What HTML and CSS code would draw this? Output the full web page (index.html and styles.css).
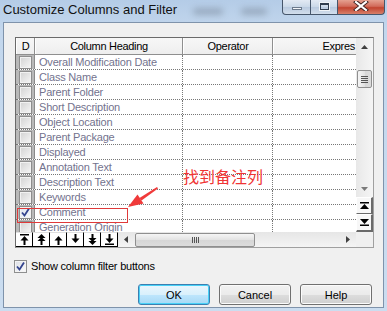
FILE: index.html
```html
<!DOCTYPE html>
<html>
<head>
<meta charset="utf-8">
<title>Customize Columns and Filter</title>
<link rel="stylesheet" href="styles.css">
</head>
<body>
<div class="window">
  <div class="titlebar">
    <span class="title">Customize Columns and Filter</span>
    <span class="smudge s1"></span>
    <span class="smudge s2"></span>
    <div class="controls">
      <div class="ctl min"><span class="min-glyph"></span></div>
      <div class="ctl max"><span class="max-glyph"></span></div>
      <div class="ctl close">
        <svg width="16" height="10" viewBox="0 0 16 10"><path d="M3 1 L13 9 M13 1 L3 9" stroke="#3a2020" stroke-width="4" stroke-linecap="square"/><path d="M3 1 L13 9 M13 1 L3 9" stroke="#ffffff" stroke-width="2.2" stroke-linecap="square"/></svg>
      </div>
    </div>
  </div>
  <div class="client">
    <div class="grid">
      <div class="main">
        <div class="header">
          <div class="hc c-d">D</div>
          <div class="hc c-h">Column Heading</div>
          <div class="hc c-o">Operator</div>
          <div class="hc c-e hc-e">Expres</div>
        </div>
        <div class="rows">
          <div class="row"><div class="c-d"><span class="cb"></span></div><div class="c-h">Overall Modification Date</div><div class="c-o"></div><div class="c-e"></div></div>
          <div class="row"><div class="c-d"><span class="cb"></span></div><div class="c-h">Class Name</div><div class="c-o"></div><div class="c-e"></div></div>
          <div class="row"><div class="c-d"><span class="cb"></span></div><div class="c-h">Parent Folder</div><div class="c-o"></div><div class="c-e"></div></div>
          <div class="row"><div class="c-d"><span class="cb"></span></div><div class="c-h">Short Description</div><div class="c-o"></div><div class="c-e"></div></div>
          <div class="row"><div class="c-d"><span class="cb"></span></div><div class="c-h">Object Location</div><div class="c-o"></div><div class="c-e"></div></div>
          <div class="row"><div class="c-d"><span class="cb"></span></div><div class="c-h">Parent Package</div><div class="c-o"></div><div class="c-e"></div></div>
          <div class="row"><div class="c-d"><span class="cb"></span></div><div class="c-h">Displayed</div><div class="c-o"></div><div class="c-e"></div></div>
          <div class="row"><div class="c-d"><span class="cb"></span></div><div class="c-h">Annotation Text</div><div class="c-o"></div><div class="c-e"></div></div>
          <div class="row"><div class="c-d"><span class="cb"></span></div><div class="c-h">Description Text</div><div class="c-o"></div><div class="c-e"></div></div>
          <div class="row"><div class="c-d"><span class="cb"></span></div><div class="c-h">Keywords</div><div class="c-o"></div><div class="c-e"></div></div>
          <div class="row"><div class="c-d"><span class="cb on"><svg width="11" height="11" viewBox="0 0 11 11"><path d="M2 5.5 L4.5 8.5 L9 1.5" fill="none" stroke="#33438e" stroke-width="1.8"/></svg></span></div><div class="c-h">Comment</div><div class="c-o"></div><div class="c-e"></div></div>
          <div class="row"><div class="c-d"><span class="cb"></span></div><div class="c-h">Generation Origin</div><div class="c-o"></div><div class="c-e"></div></div>
        </div>
        <div class="hbar">
          <div class="movebtns">
            <div class="mb"><svg width="9" height="11" viewBox="0 0 9 11"><rect x="0" y="0" width="9" height="1.5"/><path d="M4.5 2 L0.5 6.5 L8.5 6.5 Z"/><rect x="3.5" y="6" width="2" height="5"/></svg></div>
            <div class="mb"><svg width="9" height="11" viewBox="0 0 9 11"><path d="M4.5 0 L0.5 4 L8.5 4 Z"/><path d="M4.5 3 L0.5 7 L8.5 7 Z"/><rect x="3.5" y="6.5" width="2" height="4.5"/></svg></div>
            <div class="mb"><svg width="9" height="11" viewBox="0 0 9 11"><path d="M4.5 2 L0.5 6.5 L8.5 6.5 Z"/><rect x="3.5" y="6" width="2" height="5"/></svg></div>
            <div class="mb"><svg width="9" height="11" viewBox="0 0 9 11"><rect x="3.5" y="0" width="2" height="5"/><path d="M0.5 4.5 L8.5 4.5 L4.5 9 Z"/></svg></div>
            <div class="mb"><svg width="9" height="11" viewBox="0 0 9 11"><rect x="3.5" y="0" width="2" height="4.5"/><path d="M0.5 4 L8.5 4 L4.5 8 Z"/><path d="M0.5 7 L8.5 7 L4.5 11 Z"/></svg></div>
            <div class="mb"><svg width="9" height="11" viewBox="0 0 9 11"><rect x="3.5" y="0" width="2" height="5"/><path d="M0.5 4.5 L8.5 4.5 L4.5 9 Z"/><rect x="0" y="9.5" width="9" height="1.5"/></svg></div>
          </div>
          <div class="hscroll">
            <div class="harrow"><svg width="4" height="7" viewBox="0 0 4 7"><path d="M4 0 L0 3.5 L4 7 Z" fill="#404040"/></svg></div>
            <div class="htrack"><div class="hthumb"><span class="vgrip"></span><span class="vgrip"></span><span class="vgrip"></span><span class="vgrip"></span></div></div>
            <div class="harrow"><svg width="4" height="7" viewBox="0 0 4 7"><path d="M0 0 L4 3.5 L0 7 Z" fill="#404040"/></svg></div>
          </div>
        </div>
      </div>
      <div class="vbar">
        <div class="varrow up"><svg width="7" height="4" viewBox="0 0 7 4"><path d="M0 4 L3.5 0 L7 4 Z" fill="#404040"/></svg></div>
        <div class="vgap"></div>
        <div class="vthumb"><span class="hgrip"></span><span class="hgrip"></span><span class="hgrip"></span><span class="hgrip"></span></div>
        <div class="vtrack"></div>
        <div class="varrow down"><svg width="7" height="4" viewBox="0 0 7 4"><path d="M0 0 L7 0 L3.5 4 Z" fill="#7a7a7a"/></svg></div>
        <div class="vb"><svg width="9" height="7" viewBox="0 0 9 7"><rect x="0" y="0" width="9" height="1.5"/><path d="M4.5 2 L0 7 L9 7 Z"/></svg></div>
        <div class="vb"><svg width="9" height="7" viewBox="0 0 9 7"><path d="M0 0 L9 0 L4.5 5 Z"/><rect x="0" y="5.5" width="9" height="1.5"/></svg></div>
        <div class="vcorner"></div>
      </div>
    </div>
    <label class="filter"><span class="cb2"><svg width="11" height="11" viewBox="0 0 11 11"><path d="M2 5.5 L4.5 8.5 L9 1.5" fill="none" stroke="#33438e" stroke-width="1.8"/></svg></span>Show column filter buttons</label>
    <div class="buttons">
      <button class="btn default">OK</button>
      <button class="btn">Cancel</button>
      <button class="btn">Help</button>
    </div>
  </div>
  <div class="note">找到备注列</div>
  <div class="mark"></div>
  <svg class="arrow" width="45" height="35" viewBox="0 0 45 35">
    <path d="M8 29 L17.5 16.5 L23.5 25.5 Z" fill="#f03a3a"/>
    <path d="M19.5 20 L21.5 22.5 L38 10.5 L37 9 Z" fill="#f03a3a"/>
  </svg>
</div>
</body>
</html>
```

FILE: styles.css
```css
* { box-sizing: border-box; }
html, body { margin: 0; padding: 0; }
body {
  width: 387px;
  height: 311px;
  overflow: hidden;
  font-family: "Liberation Sans", Arial, sans-serif;
  background: #c6d9ee;
}
.window {
  position: relative;
  width: 387px;
  height: 311px;
  display: flex;
  flex-direction: column;
  background: linear-gradient(to bottom, #b4cce7 0, #c3d7ed 30px, #cbddf0 100%);
}
.titlebar {
  height: 22px;
  display: flex;
  align-items: flex-start;
  flex: none;
}
.title {
  font-size: 13px;
  line-height: 20px;
  padding-left: 3px;
  color: #111;
  white-space: nowrap;
}
.smudge {
  height: 7px;
  margin-top: 8px;
  background: rgba(90, 100, 115, 0.35);
  filter: blur(3px);
  border-radius: 4px;
}
.s1 { width: 30px; margin-left: 16px; }
.s2 { width: 26px; margin-left: 18px; }
.controls {
  margin-left: auto;
  margin-right: 2px;
  display: flex;
}
.ctl {
  height: 15px;
  border: 1px solid #46566b;
  border-top: none;
  display: flex;
  align-items: center;
  justify-content: center;
  background: linear-gradient(to bottom, #e2eaf4 0, #cad8e8 50%, #b9cadf 51%, #d2deec 100%);
}
.ctl + .ctl { border-left: none; }
.min { width: 29px; border-bottom-left-radius: 4px; }
.max { width: 27px; }
.close {
  width: 47px;
  border-bottom-right-radius: 4px;
  background: linear-gradient(to bottom, #e5a190 0, #d26b5a 45%, #c2442f 55%, #d7806a 100%);
}
.min-glyph {
  width: 10px;
  height: 3px;
  margin-top: 3px;
  background: #f2f5f9;
  border: 1px solid #6b7a8c;
}
.max-glyph {
  width: 9px;
  height: 7px;
  margin-top: -2px;
  border: 1px solid #2f3d4e;
  border-top-width: 2px;
  box-shadow: 0 0 0 1px #f0f4f8;
}
.close svg { margin-top: -3px; }

.client {
  height: 286px;
  margin: 0 3px 3px 3px;
  border: 1px solid #7f93ab;
  background: #f0f0f0;
  padding: 14px 11px 3px 11px;
  display: flex;
  flex-direction: column;
}
.grid {
  width: 359px;
  height: 211px;
  display: flex;
  border: 1px solid;
  border-color: #6a6a6a #a0a0a0 #a0a0a0 #6a6a6a;
  background: #fff;
  flex: none;
}
.main {
  width: 340px;
  display: flex;
  flex-direction: column;
  overflow: hidden;
}
.header {
  height: 17px;
  display: flex;
  flex: none;
  background: linear-gradient(to bottom, #f7f7f7, #eeeeee);
  border-bottom: 1px solid #8f8f8f;
}
.hc {
  font-size: 11px;
  letter-spacing: -0.3px;
  line-height: 16px;
  color: #000;
  text-align: center;
  white-space: nowrap;
  border-right: 1px solid #8f8f8f;
  border-left: 1px solid #ffffff;
}
.hc-e {
  text-align: right;
  border-right: none;
  padding-right: 1px;
}
.c-d { width: 19px; flex: none; }
.c-h { width: 148px; flex: none; }
.c-o { width: 90px; flex: none; }
.c-e { width: 83px; flex: none; }
.rows {
  height: 177px;
  overflow: hidden;
  flex: none;
}
.row {
  height: 15px;
  display: flex;
  border-bottom: 1px dotted #777;
}
.row > div {
  border-right: 1px dotted #777;
  font-size: 11px;
  letter-spacing: -0.2px;
  line-height: 14px;
  color: #73738e;
  white-space: nowrap;
}
.row > .c-e { border-right: none; }
.row .c-h { padding-left: 4px; }
.row .c-d {
  background: #b9b9b9;
  border-right: 1px solid #8a8a8a;
  display: flex;
  align-items: center;
  padding-left: 3px;
}
.cb {
  width: 13px;
  height: 13px;
  border: 1px solid #8e8e8e;
  background: linear-gradient(135deg, #d2d2d2, #f6f6f6);
  box-shadow: inset 0 0 0 1px #f2f2f2;
  display: flex;
  align-items: center;
  justify-content: center;
}
.cb.on { background: linear-gradient(135deg, #dde3ee, #f8f9fc); }
.hbar {
  height: 15px;
  display: flex;
  flex: none;
  background: #f0f0f0;
}
.movebtns { display: flex; }
.mb {
  width: 17px;
  height: 15px;
  background: #fff;
  border-top: 1px solid #e0e0e0;
  border-right: 1px solid #000;
  border-bottom: 1px solid #000;
  display: flex;
  align-items: center;
  justify-content: center;
}
.mb svg, .vb svg { fill: #000; }
.hscroll {
  flex: 1;
  display: flex;
  background: linear-gradient(to bottom, #e6e6e6, #f4f4f4);
}
.harrow {
  width: 16px;
  display: flex;
  align-items: center;
  justify-content: center;
}
.htrack {
  flex: 1;
  display: flex;
  align-items: center;
  padding-left: 1px;
}
.hthumb {
  width: 120px;
  height: 14px;
  border: 1px solid #8f8f8f;
  border-radius: 2px;
  background: linear-gradient(to bottom, #f5f5f5, #e2e2e2 50%, #d6d6d6 51%, #dcdcdc);
  display: flex;
  align-items: center;
  justify-content: center;
  gap: 1px;
}
.vgrip { width: 1px; height: 6px; background: #555; }
.vbar {
  width: 17px;
  display: flex;
  flex-direction: column;
  background: linear-gradient(to right, #e8e8e8, #f5f5f5);
}
.varrow {
  height: 17px;
  display: flex;
  align-items: center;
  justify-content: center;
  flex: none;
}
.varrow.down { height: 16px; }
.vgap { height: 15px; flex: none; }
.vthumb {
  height: 18px;
  margin: 0 1px 0 1px;
  border: 1px solid #8f8f8f;
  border-radius: 2px;
  background: linear-gradient(to right, #f5f5f5, #e2e2e2 50%, #d6d6d6 51%, #dcdcdc);
  display: flex;
  flex-direction: column;
  align-items: center;
  justify-content: center;
  gap: 1px;
  flex: none;
}
.hgrip { width: 7px; height: 1px; background: #555; }
.vtrack { flex: 1; }
.vb {
  height: 17px;
  background: #f7f7f7;
  border-top: 1px solid #fff;
  border-left: 1px solid #fff;
  border-right: 2px solid #6a6a6a;
  border-bottom: 1px solid #6a6a6a;
  display: flex;
  align-items: center;
  justify-content: center;
  flex: none;
}
.vb + .vb { height: 18px; border-bottom-width: 2px; }
.vcorner { height: 15px; flex: none; background: #f0f0f0; }

.filter {
  margin-top: 11px;
  margin-left: -1px;
  height: 14px;
  display: flex;
  align-items: center;
  gap: 4px;
  font-size: 11px;
  letter-spacing: -0.2px;
  color: #000;
  flex: none;
}
.cb2 {
  width: 13px;
  height: 13px;
  border: 1px solid #8e8f8f;
  background: linear-gradient(135deg, #dcdfe6, #fbfbfb);
  box-shadow: inset 0 0 0 1px #f4f4f4;
  display: flex;
  align-items: center;
  justify-content: center;
}
.buttons {
  margin-top: 11px;
  display: flex;
  justify-content: flex-end;
  gap: 9px;
  flex: none;
}
.btn {
  width: 72px;
  height: 21px;
  padding: 0;
  font-family: "Liberation Sans", Arial, sans-serif;
  font-size: 11px;
  color: #000;
  border: 1px solid #707070;
  border-radius: 3px;
  background: linear-gradient(to bottom, #f2f2f2 0, #ebebeb 50%, #dddddd 51%, #cfcfcf 100%);
  box-shadow: inset 0 0 0 1px #fbfbfb;
}
.btn.default {
  border-color: #3c7fb1;
  background: linear-gradient(to bottom, #eaf6fd 0, #d9f0fc 50%, #bee6fd 51%, #a7d9f5 100%);
  box-shadow: inset 0 0 0 1px #48d1f7;
}

.note {
  position: absolute;
  left: 183px;
  top: 166px;
  font-family: "Noto Sans CJK SC", sans-serif;
  font-size: 16px;
  line-height: 20px;
  color: #f03434;
}
.mark {
  position: absolute;
  left: 17px;
  top: 208px;
  width: 111px;
  height: 15px;
  border: 1px solid #e03a3a;
}
.arrow {
  position: absolute;
  left: 120px;
  top: 178px;
}
```
